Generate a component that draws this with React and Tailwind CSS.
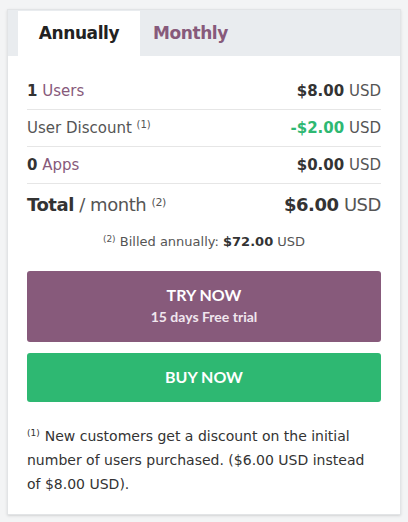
export default function App() {
    const rowFont = { fontFamily: '"DejaVu Sans", sans-serif' };
    return (
        <div className="w-[408px] h-[522px] bg-[#f3f4f5] pt-[9px] px-[7px]" style={rowFont}>
            <div className="h-[506px] bg-white border border-[#e2e4e6] shadow-sm flex flex-col">
                {/* tabs */}
                <div className="h-[46px] bg-[#e9ecef] flex pl-[10px] pt-[1px]">
                    <div className="w-[122px] bg-white flex items-center justify-center text-[17px] font-semibold text-[#222] tracking-tight">
                        Annually
                    </div>
                    <div className="px-[13px] flex items-center text-[17px] font-semibold text-[#875a7b] tracking-tight">
                        Monthly
                    </div>
                </div>

                <div className="px-[19px] pt-[17px] flex flex-col">
                    <div className="flex justify-between items-center h-[37px] border-b border-[#e6e6e6] text-[15px] text-[#444]">
                        <span><b className="text-[#333]">1</b> <span className="text-[#875a7b]">Users</span></span>
                        <span><b className="text-[#333]">$8.00</b> <span className="text-[#555]">USD</span></span>
                    </div>
                    <div className="flex justify-between items-center h-[37px] border-b border-[#e6e6e6] text-[15px] text-[#555]">
                        <span>User Discount <sup className="text-[10px]">(1)</sup></span>
                        <span><b className="text-[#2eb872]">-$2.00</b> <span>USD</span></span>
                    </div>
                    <div className="flex justify-between items-center h-[37px] border-b border-[#e6e6e6] text-[15px] text-[#444]">
                        <span><b className="text-[#333]">0</b> <span className="text-[#875a7b]">Apps</span></span>
                        <span><b className="text-[#333]">$0.00</b> <span className="text-[#555]">USD</span></span>
                    </div>
                    <div className="flex justify-between items-center h-[41px] text-[18px] text-[#555] tracking-tight">
                        <span><b className="text-[#333]">Total</b> / month <sup className="text-[11px]">(2)</sup></span>
                        <span><b className="text-[#333]">$6.00</b> USD</span>
                    </div>
                    <div className="text-center text-[13px] text-[#555] mt-[7px]">
                        <sup className="text-[9px]">(2)</sup> Billed annually: <b className="text-[#333]">$72.00</b> USD
                    </div>

                    <button className="mt-[19px] h-[71px] rounded-[3px] bg-[#875a7b] text-white flex flex-col items-center justify-center" style={{ fontFamily: 'Lato, sans-serif' }}>
                        <span className="text-[16px] font-bold leading-[22px]">TRY NOW</span>
                        <span className="text-[14px] font-bold leading-[22px] text-[#f0e6ee]">15 days Free trial</span>
                    </button>
                    <button className="mt-[11px] h-[49px] rounded-[3px] bg-[#2eb872] text-white text-[16px] font-bold" style={{ fontFamily: 'Lato, sans-serif' }}>
                        BUY NOW
                    </button>

                    <div className="mt-[22px] pr-[6px] text-[14px] leading-[24px] text-[#333]">
                        <div>
                            <sup className="text-[9px] mr-[5px]">(1)</sup><span>New customers get a discount on the initial</span>
                        </div>
                        <div>number of users purchased. ($6.00 USD instead of $8.00 USD).</div>
                    </div>
                </div>
            </div>
        </div>
    );
}
